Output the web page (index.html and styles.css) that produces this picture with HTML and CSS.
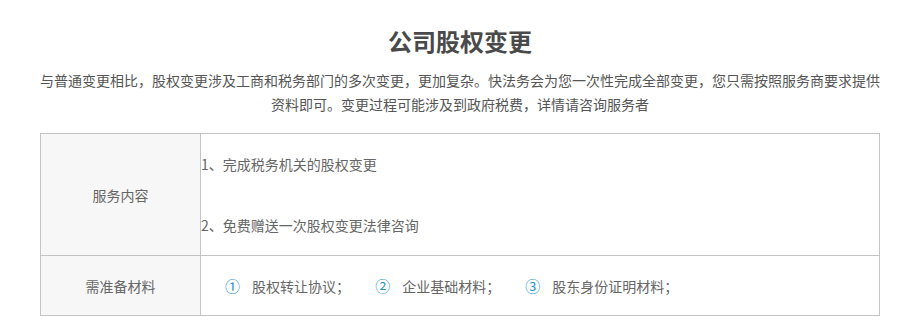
FILE: index.html
```html
<!DOCTYPE html>
<html lang="zh-CN">
<head>
    <meta charset="UTF-8">
    <title>公司股权变更</title>
    <link rel="stylesheet" href="styles.css">
</head>
<body>
    <div class="container">
        <h2>公司股权变更</h2>
        <p class="intro">与普通变更相比，股权变更涉及工商和税务部门的多次变更，更加复杂。快法务会为您一次性完成全部变更，您只需按照服务商要求提供资料即可。变更过程可能涉及到政府税费，详情请咨询服务者</p>

        <table class="info">
            <tr>
                <th>服务内容</th>
                <td class="content">
                    <div>1、完成税务机关的股权变更</div>
                    <div class="second">2、免费赠送一次股权变更法律咨询</div>
                </td>
            </tr>
            <tr>
                <th>需准备材料</th>
                <td class="materials">
                    <span class="item"><span class="num">①</span>股权转让协议；</span>
                    <span class="item"><span class="num">②</span>企业基础材料；</span>
                    <span class="item"><span class="num">③</span>股东身份证明材料；</span>
                </td>
            </tr>
        </table>
    </div>
</body>
</html>
```

FILE: styles.css
```css
body {
    margin: 0;
    font-family: "Noto Sans CJK SC", "Noto Sans", sans-serif;
    background: #fff;
    color: #666;
}
.container {
    width: 840px;
    margin: 0 auto;
    padding-top: 24px;
}
h2 {
    margin: 0;
    text-align: center;
    font-size: 24px;
    line-height: 34px;
    font-weight: bold;
    color: #4a4a4a;
}
.intro {
    margin: 10px 0 17px;
    font-size: 14px;
    line-height: 24px;
    text-align: justify;
    text-align-last: center;
    color: #555;
}
.info {
    width: 100%;
    border-collapse: collapse;
    font-size: 14px;
    border: 1px solid #c4c4c4;
}
.info th,
.info td {
    border: 1px solid #c4c4c4;
    padding: 0;
    vertical-align: middle;
}
.info th {
    width: 159px;
    background: #f7f7f7;
    font-weight: normal;
    color: #666;
}
.content {
    padding: 18px 0 !important;
    line-height: 24px;
}
.content .second {
    margin-top: 37px;
}
.materials {
    height: 59px;
    padding-left: 24px !important;
}
.item {
    margin-right: 22px;
}
.num {
    display: inline-block;
    width: 15px;
    margin-right: 12px;
    color: #1a8fc9;
    font-size: 15px;
}
```
